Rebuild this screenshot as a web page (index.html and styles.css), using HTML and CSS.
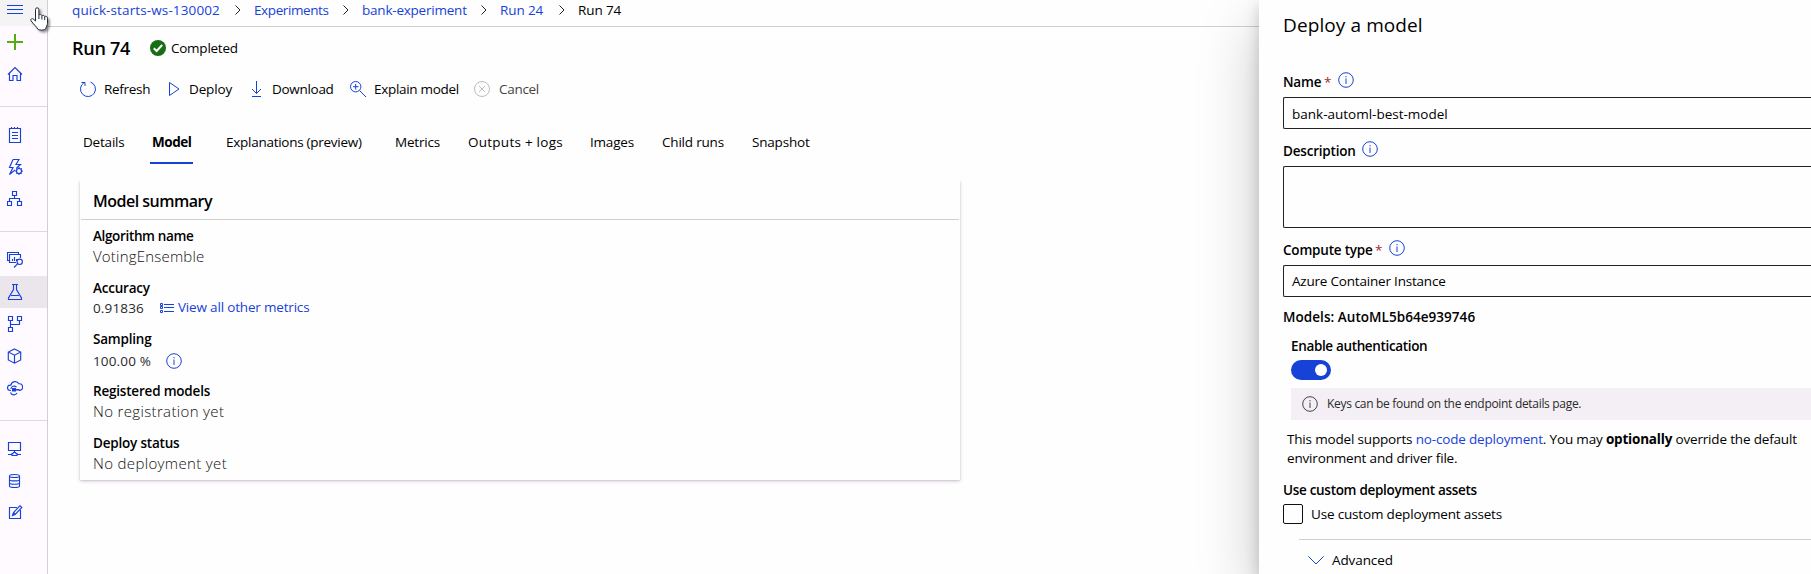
FILE: index.html
```html
<!DOCTYPE html>
<html lang="en">
<head>
<meta charset="utf-8">
<title>Run 74</title>
<link rel="stylesheet" href="styles.css">
</head>
<body>
<div class="app">
  <nav class="sidebar">
    <a class="menu"><svg class="ico" viewBox="0 0 16 16"><path d="M0 3.500h16M0 7.500h16M0 11.500h16"/></svg></a>
    <a class="item plus"><svg class="ico" viewBox="0 0 16 16"><path d="M8 0v16M0 8h16"/></svg></a>
    <a class="item"><svg class="ico" viewBox="0 0 16 16"><path d="M1 8.500L8 1.500l7 7M2.500 7.500v7h3.500v-5h4v5h3.500v-7"/></svg></a>
    <hr>
    <a class="item"><svg class="ico" viewBox="0 0 16 16"><path d="M2.500 1.500h11v14h-11zM4.500 0v2M7.500 0v2M10.500 0v2M5 5.500h6M5 8.500h6M5 11.500h6"/></svg></a>
    <a class="item"><svg class="ico" viewBox="0 0 16 16"><path d="M6 .5h6L9 5.500h4.500L9.500 9M6 .5L2.500 8.500h3.500L2.500 15.500L8 11"/><circle cx="12" cy="12" r="2.500"/><path d="M12 8v1.500M12 14.500V16M8 12h1.500M14.500 12H16M9.300 9.300l1 1M13.700 13.700l1 1M14.700 9.300l-1 1M10.300 13.700l-1 1"/></svg></a>
    <a class="item"><svg class="ico" viewBox="0 0 16 16"><path d="M5.500.5h4v4h-4zM.5 10.500h4v4h-4zM10.500 10.500h4v4h-4zM7.500 4.500v3M2.500 10.500v-3h10v3"/></svg></a>
    <hr>
    <a class="item"><svg class="ico" viewBox="0 0 16 16"><path d="M2.500 8.500h-2v-8h11v2M9 10.500H2.500v-8h11V6M5.500 9V7M7.500 9V5M9.500 9V7M10.500 11.800L7 15.500"/><circle cx="12.700" cy="9.800" r="2.700"/></svg></a>
    <a class="item active"><svg class="ico" viewBox="0 0 16 16"><path d="M5 .5h6M6.500.5v5L1.500 14v1.500h13V14l-5-8.500v-5M4 11.500h8"/></svg></a>
    <a class="item"><svg class="ico" viewBox="0 0 16 16"><path d="M1.500.5h4v4h-4zM10.500.5h4v4h-4zM1.500 11.500h4v4h-4zM3.500 4.500v7M3.500 8.500h9v-4"/></svg></a>
    <a class="item"><svg class="ico" viewBox="0 0 16 16"><path d="M7.500 1l6.200 3v8l-6.200 3.200L1.300 12V4zM1.300 4l6.200 3.200L13.700 4M7.500 7.200v8"/></svg></a>
    <a class="item"><svg class="ico" viewBox="0 0 16 16"><path d="M4 10.500H3.200a2.700 2.700 0 0 1 0-5.400h.7a4.300 4.300 0 0 1 8-1.300 3.300 3.300 0 0 1 .9 6.600H12M9.500 7.200A3.300 3.300 0 0 0 3.800 9M3.500 12.500A3.600 3.600 0 0 0 10 13"/><path class="solid" d="M5 8h4v3.500H5zM8.500 9h4v1.500h-4z"/></svg></a>
    <hr>
    <a class="item"><svg class="ico" viewBox="0 0 16 16"><path d="M1.500 1.500h12v8h-12zM7.500 9.500v2M1 13.500h4M10 13.500h4M5 14.500v-2h1l.5-1h2l.5 1h1v2z"/></svg></a>
    <a class="item"><svg class="ico" viewBox="0 0 16 16"><path d="M2.500 3c0-2 10-2 10 0v10c0 2-10 2-10 0zM2.500 3c0 2 10 2 10 0M2.500 6.400c0 2 10 2 10 0M2.500 9.700c0 2 10 2 10 0"/></svg></a>
    <a class="item"><svg class="ico" viewBox="0 0 16 16"><path d="M13.500 5v8.500h-11v-11H10M5.500 10.500l1-3L13 .7l1.800 1.800L8.200 9.500zM6.500 7.500l2 2"/></svg></a>
  </nav>

  <main class="main">
    <div class="crumbs">
      <a class="c1">quick-starts-ws-130002</a><svg class="sep" viewBox="0 0 6 10"><path d="M.5.500L5 5L.5 9.500"/></svg>
      <a class="c2">Experiments</a><svg class="sep" viewBox="0 0 6 10"><path d="M.5.500L5 5L.5 9.500"/></svg>
      <a class="c3">bank-experiment</a><svg class="sep" viewBox="0 0 6 10"><path d="M.5.500L5 5L.5 9.500"/></svg>
      <a class="c4">Run 24</a><svg class="sep" viewBox="0 0 6 10"><path d="M.5.500L5 5L.5 9.500"/></svg>
      <span class="c4">Run 74</span>
    </div>
    <div class="title">
      <h1>Run 74</h1>
      <svg class="ok" viewBox="0 0 16 16"><circle cx="8" cy="8" r="8"/><path d="M3.800 8.200l2.800 2.800 5.600-6"/></svg>
      <span>Completed</span>
    </div>
    <div class="toolbar">
      <svg class="ico" viewBox="0 0 16 16"><path d="M10.500 1A7.500 7.500 0 1 1 4 1.700M1.500 1.500h3.500V5"/></svg><span class="t1">Refresh</span>
      <svg class="ico" viewBox="0 0 16 16"><path d="M.5 1.500v13L10 8z"/></svg><span class="t2">Deploy</span>
      <svg class="ico" viewBox="0 0 16 16"><path d="M5.500 0v12.500M1 8l4.500 4.500L10 8M1 15.500h9"/></svg><span class="t3">Download</span>
      <svg class="ico" viewBox="0 0 16 16"><circle cx="5.700" cy="5.700" r="5.200"/><path d="M5.700 3v5.500M3 5.700h5.500M9.500 9.500L16 16"/></svg><span class="t4">Explain model</span>
      <svg class="ico off" viewBox="0 0 16 16"><circle cx="8" cy="8" r="7.500"/><path d="M5 5l6 6M11 5l-6 6"/></svg><span class="t5">Cancel</span>
    </div>
    <div class="tabs">
      <a class="d1">Details</a><a class="on">Model</a><a class="d3">Explanations (preview)</a><a class="d4">Metrics</a><a class="d5">Outputs + logs</a><a class="d6">Images</a><a class="d7">Child runs</a><a class="d8">Snapshot</a>
    </div>
    <section class="card">
      <h2>Model summary</h2>
      <dl>
        <div><dt class="l1">Algorithm name</dt><dd class="v1">VotingEnsemble</dd></div>
        <div><dt class="l2">Accuracy</dt><dd class="row metrics"><span class="num">0.91836</span><svg class="list" viewBox="0 0 14 10"><path d="M4 1.500h10M4 4.500h10M4 8.500h10M.5.500h2v2h-2zM.5 3.500h2v2h-2zM.5 7.500h2v2h-2z"/></svg><a>View all other metrics</a></dd></div>
        <div class="short"><dt class="l3">Sampling</dt><dd class="row pct"><span class="num">100.00 %</span><svg class="info" viewBox="0 0 16 16"><circle cx="8" cy="8" r="7.300"/><path d="M8 6.500v5.500M8 4v1.300"/></svg></dd></div>
        <div><dt class="l4">Registered models</dt><dd class="v4">No registration yet</dd></div>
        <div><dt class="l5">Deploy status</dt><dd class="v4">No deployment yet</dd></div>
      </dl>
    </section>
  </main>

  <aside class="panel">
    <h2>Deploy a model</h2>
    <div class="label name"><b>Name</b><i>*</i><svg class="info" viewBox="0 0 16 16"><circle cx="8" cy="8" r="7.300"/><path d="M8 6.500v5.500M8 4v1.300"/></svg></div>
    <div class="field"><span class="f1">bank-automl-best-model</span></div>
    <div class="label desc"><b>Description</b><svg class="info" viewBox="0 0 16 16"><circle cx="8" cy="8" r="7.300"/><path d="M8 6.500v5.500M8 4v1.300"/></svg></div>
    <div class="field area"></div>
    <div class="label comp"><b>Compute type</b><i>*</i><svg class="info" viewBox="0 0 16 16"><circle cx="8" cy="8" r="7.300"/><path d="M8 6.500v5.500M8 4v1.300"/></svg></div>
    <div class="field select"><span class="f2">Azure Container Instance</span></div>
    <div class="models">Models: AutoML5b64e939746</div>
    <div class="auth">
      <div class="auth-label">Enable authentication</div>
      <div class="toggle"></div>
      <div class="note"><svg class="info" viewBox="0 0 16 16"><circle cx="8" cy="8" r="7.300"/><path d="M8 6.500v5.500M8 4v1.300"/></svg><span>Keys can be found on the endpoint details page.</span></div>
    </div>
    <p><span class="p1">This model supports <a>no-code deployment</a>. You may <b>optionally</b> override the default</span><br><span class="p2">environment and driver file.</span></p>
    <div class="assets">Use custom deployment assets</div>
    <label class="check"><span class="box"></span><span class="check-text">Use custom deployment assets</span></label>
    <div class="advanced"><svg viewBox="0 0 16 9"><path d="M.5.500L8 8L15.500.500"/></svg><span>Advanced</span></div>
  </aside>
</div>
<svg class="cursor" viewBox="0 0 20 25"><path d="M5.500 14V2.500a1.700 1.700 0 0 1 3.400 0V8c.5-.8 2.600-.6 3 .7.800-.7 2.500-.4 2.800.8.900-.5 2.800 0 2.800 1.800v5c0 2.300-1.500 3.200-1.800 5.700-1.200 1.500-6.800 1.500-8 0C6.500 19.500 3.800 17.500 1 13.800c-.8-1.800 1.200-2.800 2.500-1.600zM8.900 8v4M11.900 9v3.500M14.700 10v3"/></svg>
</body>
</html>
```

FILE: styles.css
```css
* { box-sizing: border-box; }
body {
  margin: 0;
  width: 1811px;
  height: 574px;
  overflow: hidden;
  background: #fefefe;
  color: #000;
  font: 13.5px/20px "Open Sans", "Noto Sans", sans-serif;
}
h1, h2, dl, dd, p { margin: 0; }
a { color: #1742d8; }
svg { display: block; flex: none; fill: none; stroke: #1742d8; stroke-width: 1; }
.app { display: flex; height: 574px; overflow: hidden; white-space: nowrap; }

.sidebar {
  flex: none;
  width: 48px;
  background: #fefaff;
  border-right: 1px solid #d3cfd6;
}
.ico { width: 16px; height: 16px; }
.sidebar svg { stroke-width: 1.150; }
.sidebar a { display: flex; align-items: center; height: 32px; padding-left: 7px; }
.sidebar a.menu { height: 26px; align-items: flex-start; padding-top: 2px; background: #f4f4f4; }
.sidebar .active { background: #eae6eb; }
.sidebar .plus svg { stroke: #57ab0c; stroke-width: 2; }
.sidebar hr { height: 1px; margin: 16px 0 12px; border: 0; background: #dcd8de; }
.sidebar .solid { fill: #1742d8; stroke: none; }

.main { flex: none; width: 1211px; }
.crumbs {
  display: grid;
  grid-template-columns: 163px 19px 89px 19px 119px 19px 59px 19px 50px;
  height: 27px;
  padding-left: 24px;
  border-bottom: 1px solid #d0d0d0;
}
.c1 { letter-spacing: .12px; }
.c2 { letter-spacing: -.4px; }
.c3 { letter-spacing: -.22px; }
.c4 { letter-spacing: -.1px; }
.sep { width: 6px; height: 10px; margin-top: 5px; stroke: #222; }
.title { display: flex; align-items: center; height: 42px; padding-left: 24px; letter-spacing: -.25px; }
.title h1 { width: 78px; font-size: 18px; font-weight: 600; }
.ok { width: 16px; height: 16px; margin-right: 5px; fill: #176d13; stroke: none; }
.ok path { fill: none; stroke: #fff; stroke-width: 2; }
.toolbar {
  display: grid;
  grid-template-columns: 24px 65px 20px 62px 21px 78px 24px 100px 25px 60px;
  align-items: center;
  height: 40px;
  padding-left: 32px;
  letter-spacing: -.3px;
}
.toolbar .t2 { letter-spacing: -.15px; }
.off { stroke: #bdbbbd; }
.t5 { color: #444; }
.tabs {
  display: grid;
  grid-template-columns: 67px 43px 33px 169px 73px 122px 72px 90px 80px;
  height: 32px;
  margin-top: 23px;
  padding-left: 35px;
  letter-spacing: -.2px;
}
.tabs a { color: #000; }
.tabs .on { border-bottom: 2px solid #1742d8; padding-left: 2px; font-weight: 700; letter-spacing: -.45px; }
.tabs .d3 { grid-column: 4; letter-spacing: -.27px; }
.tabs .d5 { letter-spacing: .25px; }

.card {
  width: 880px;
  height: 300px;
  margin: 16px 0 0 32px;
  background: #fefefe;
  box-shadow: 0 1.600px 3.600px rgba(50, 0, 60, .18), 0 .6px 1.500px rgba(50, 0, 60, .2);
}
.card h2 {
  height: 40px;
  margin: 0 1px;
  padding: 11px 0 0 12px;
  border-bottom: 1px solid #cfcfcf;
  font-size: 16px;
  font-weight: 600;
  letter-spacing: -.5px;
}
dl { padding: 6px 0 0 13px; }
dl > div { height: 52px; }
dl > .short { margin-top: -1px; }
dt, b, .models, .auth-label, .assets { font-weight: 600; letter-spacing: -.2px; }
.l1 { letter-spacing: -.35px; }
dd { color: #111; font-size: 15px; font-weight: 300; }
.v1 { letter-spacing: .2px; }
.v4 { letter-spacing: .35px; }
.row { display: flex; align-items: center; height: 20px; color: #2b2b2b; font-size: 13.5px; font-weight: 400; }
.row a { margin-top: -2px; letter-spacing: -.18px; }
.num { width: 67px; letter-spacing: .15px; }
.list { width: 14px; height: 10px; margin-right: 4px; }
.pct { padding-top: 1px; height: 22px; }
.pct .num { width: 73px; }
.info { width: 16px; height: 16px; }

.panel {
  flex: none;
  width: 560px;
  padding: 15px 0 0 24px;
  background: #fefefe;
  box-shadow: 0 25.600px 57.600px rgba(0, 0, 0, .22), 0 4.800px 14.400px rgba(0, 0, 0, .18);
}
.panel h2 { height: 57px; font-size: 19px; font-weight: 400; letter-spacing: .1px; }
.label { display: flex; height: 25px; }
.label i { width: 7px; margin-left: 4px; color: #a4262c; font-style: normal; }
.name b { width: 37px; }
.label i + .info { margin-left: 7px; }
.desc b { width: 79px; }
.comp b { width: 88px; }
.field { height: 32px; padding: 6px 8px; border: 1px solid #222; border-radius: 2px 0 0 2px; border-right: 0; }
.select { padding-top: 5px; letter-spacing: -.2px; }
.area { height: 62px; }
.desc, .comp { margin-top: 12px; }
.models { margin-top: 10px; letter-spacing: .05px; }
.auth { padding-left: 8px; margin-top: 9px; }
.auth-label { letter-spacing: -.35px; }
.toggle { width: 40px; height: 20px; margin: 4px 0 8px; padding: 4px 0 0 24px; border-radius: 10px; background: #1742d8; }
.toggle::before { content: ""; display: block; width: 12px; height: 12px; border-radius: 50%; background: #fff; }
.note { display: flex; align-items: center; height: 32px; padding-left: 11px; background: #f3eff4; color: #2b2b2b; font-size: 12px; letter-spacing: -.31px; }
.note .info { margin-right: 9px; stroke: #444; }
.panel p { margin-top: 10px; padding-left: 4px; line-height: 19px; letter-spacing: -.17px; }
.panel p b { font-weight: 700; }
.assets { margin-top: 12px; letter-spacing: -.3px; }
.check { display: flex; margin-top: 4px; letter-spacing: -.17px; }
.box { width: 20px; height: 20px; margin-right: 8px; border: 1px solid #111; border-radius: 2px; }
.advanced { display: flex; margin: 15px 0 0 16px; padding: 10px 0 0 9px; border-top: 1px solid #cfcfcf; letter-spacing: -.1px; }
.advanced svg { width: 16px; height: 9px; margin: 6px 8px 0 0; }
.cursor {
  position: absolute;
  left: 30px;
  top: 7px;
  width: 20px;
  height: 25px;
  fill: #fff;
  stroke: #222a38;
  filter: drop-shadow(2px 2px 1px rgba(0, 0, 0, .4));
}
```
